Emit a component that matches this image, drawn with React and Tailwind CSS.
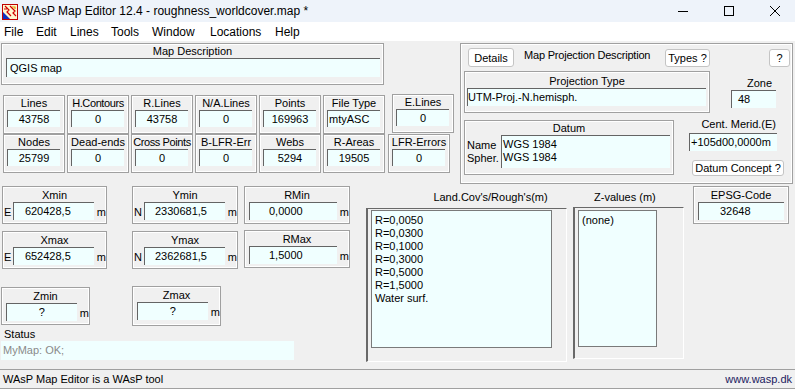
import clsx from 'clsx';

const frame = 'border border-[#a0a0a0] shadow-[inset_1px_1px_0_#fff,inset_-1px_-1px_0_#fff]';

function Edit({ className, children }) {
    return (
        <div className={clsx('bg-[#f0ffff] border-t border-l border-[#646464] whitespace-nowrap overflow-hidden', className)}>
            {children}
        </div>
    );
}

function Btn({ className, children }) {
    return (
        <div className={clsx('bg-white border border-[#c4c4c4] rounded-[3px] flex items-center justify-center leading-[14px]', className)}>
            {children}
        </div>
    );
}

function Stat({ label, value, className, left, tight }) {
    return (
        <div className={clsx(frame, 'w-[62px] h-[39px] shrink-0', className)}>
            <div className={clsx('text-center leading-[14px] whitespace-nowrap', tight && 'tracking-[-0.4px] -mx-[2px]')}>{label}</div>
            <Edit className={clsx('ml-[3px] w-[53px] h-[17px] leading-[16px]', left ? 'pl-[1px]' : 'text-center')}>{value}</Edit>
        </div>
    );
}

function Coord({ label, letter, value, pad, w, editW, editMl, className }) {
    return (
        <div className={clsx(frame, 'h-[38px] shrink-0', w, className)}>
            <div className="text-center leading-[14px] mt-[1px]">{label}</div>
            <div className="flex items-center h-[18px]">
                {letter ? <span className="w-[9px] pl-[1px] pt-[2px]">{letter}</span> : null}
                <Edit className={clsx('h-[18px] leading-[17px]', editW, editMl, pad)}>{value}</Edit>
                <span className="ml-[3px] pt-[2px]">m</span>
            </div>
        </div>
    );
}

function WaspIcon() {
    return (
        <svg width="16" height="16" viewBox="0 0 16 16">
            <rect x="0.5" y="0.5" width="15" height="15" fill="#fff8d0" stroke="#c00000" />
            <path d="M1 15 L1 8 L8 15 Z" fill="#1030c0" />
            <path d="M3 2 L7 6 L5 8 L9 12 M8 2 L13 7 L11 9 L14 12 M2 5 L5 5" stroke="#d00000" strokeWidth="1.2" fill="none" />
            <path d="M10 3 L13 3 L13 5" stroke="#e0a000" strokeWidth="1.2" fill="none" />
        </svg>
    );
}

export default function App() {
    const menu = [
        ['File', 'w-[32px]'],
        ['Edit', 'w-[34px]'],
        ['Lines', 'w-[41px]'],
        ['Tools', 'w-[41px]'],
        ['Window', 'w-[58px]'],
        ['Locations', 'w-[65px]'],
        ['Help', 'w-[40px]'],
    ];
    const roughs = ['R=0,0050', 'R=0,0300', 'R=0,1000', 'R=0,3000', 'R=0,5000', 'R=1,5000', 'Water surf.'];

    return (
        <div className="w-[795px] h-[389px] overflow-hidden bg-[#f0f0f0] text-[11px] text-black font-['Liberation_Sans',Arial,sans-serif]">
            {/* title bar */}
            <div className="h-[22px] bg-[#eef3fa] flex items-center text-[12px]">
                <div className="ml-[2px] mt-[2px]"><WaspIcon /></div>
                <span className="ml-[4px]">WAsP Map Editor 12.4 - roughness_worldcover.map *</span>
                <div className="ml-auto flex mr-[-3px] h-full">
                    <div className="w-[46px] flex items-center justify-center">
                        <svg width="10" height="10" viewBox="0 0 10 10"><path d="M0 5.5 H10" stroke="#000" strokeWidth="1" /></svg>
                    </div>
                    <div className="w-[46px] flex items-center justify-center">
                        <svg width="10" height="10" viewBox="0 0 10 10"><rect x="0.5" y="0.5" width="9" height="9" fill="none" stroke="#000" strokeWidth="1" /></svg>
                    </div>
                    <div className="w-[46px] flex items-center justify-center">
                        <svg width="10" height="10" viewBox="0 0 10 10"><path d="M0 0 L10 10 M10 0 L0 10" stroke="#000" strokeWidth="1" /></svg>
                    </div>
                </div>
            </div>

            {/* menu bar */}
            <div className="h-[19px] bg-white flex items-center pl-[4px] text-[12px]">
                {menu.map(([m, w]) => <span key={m} className={w}>{m}</span>)}
            </div>

            {/* upper part */}
            <div className="h-[142px] flex">
                <div className="w-[457px] shrink-0 pt-[2px]">
                    <div className={clsx(frame, 'ml-[1px] w-[383px] h-[42px]')}>
                        <div className="text-center leading-[13px] mt-[1px]">Map Description</div>
                        <Edit className="ml-[4px] w-[374px] h-[19px] leading-[18px] pl-[3px]">QGIS map</Edit>
                    </div>

                    <div className="mt-[9px] ml-[3px] flex items-start gap-[2px]">
                        <Stat className="mt-[1px]" label="Lines" value="43758" />
                        <Stat className="mt-[1px]" label="H.Contours" value="0" tight />
                        <Stat className="mt-[1px]" label="R.Lines" value="43758" />
                        <Stat className="mt-[1px]" label="N/A.Lines" value="0" />
                        <Stat className="mt-[1px]" label="Points" value="169963" />
                        <Stat className="mt-[1px]" label="File Type" value="mtyASC" left />
                        <Stat className="ml-[5px]" label="E.Lines" value="0" />
                    </div>
                    <div className="mt-[0px] ml-[3px] flex items-start gap-[2px]">
                        <Stat label="Nodes" value="25799" />
                        <Stat label="Dead-ends" value="0" />
                        <Stat label="Cross Points" value="0" tight />
                        <Stat label="B-LFR-Err" value="0" />
                        <Stat label="Webs" value="5294" />
                        <Stat label="R-Areas" value="19505" />
                        <Stat className="ml-[1px]" label="LFR-Errors" value="0" />
                    </div>
                </div>

                {/* projection panel */}
                <div className={clsx(frame, 'ml-[3px] mt-[2px] w-[333px] h-[141px]')}>
                    <div className="flex items-start h-[27px]">
                        <Btn className="ml-[7px] mt-[4px] w-[46px] h-[19px]">Details</Btn>
                        <div className="ml-[10px] mt-[3px] w-[141px] whitespace-nowrap tracking-[-0.2px]">Map Projection Description</div>
                        <Btn className="mt-[5px] w-[45px] h-[18px]">Types ?</Btn>
                        <Btn className="ml-[59px] mt-[5px] w-[21px] h-[18px]">?</Btn>
                    </div>
                    <div className="flex items-start">
                        <div className={clsx(frame, 'ml-[3px] w-[246px] h-[42px]')}>
                            <div className="text-center leading-[14px] mt-[2px]">Projection Type</div>
                            <Edit className="ml-[2px] w-[239px] h-[18px] leading-[17px] bg-[#f0f0f0]">UTM-Proj.-N.hemisph.</Edit>
                        </div>
                        <div className="ml-[21px] w-[45px]">
                            <div className="leading-[14px] mt-[5px] pl-[16px]">Zone</div>
                            <Edit className="h-[18px] leading-[17px] bg-[#f0f0f0] pl-[6px]">48</Edit>
                        </div>
                    </div>
                    <div className="flex items-start mt-[7px]">
                        <div className={clsx(frame, 'ml-[3px] w-[210px] h-[55px]')}>
                            <div className="text-center leading-[14px]">Datum</div>
                            <div className="flex">
                                <div className="ml-[2px] w-[34px] leading-[13px] pt-[4px]">
                                    <div>Name</div>
                                    <div>Spher.</div>
                                </div>
                                <Edit className="w-[169px] h-[33px] bg-[#f0f0f0] leading-[13px] pt-[2px] pl-[1px]">
                                    <div>WGS 1984</div>
                                    <div>WGS 1984</div>
                                </Edit>
                            </div>
                        </div>
                        <div className="ml-[15px] w-[88px]">
                            <div className="leading-[14px] mt-[-3px] text-right pr-[1px]">Cent. Merid.(E)</div>
                            <Edit className="mt-[2px] h-[18px] leading-[17px] pl-[1px]">+105d00,0000m</Edit>
                            <Btn className="ml-[3px] mt-[9px] w-[92px] h-[16px]">Datum Concept ?</Btn>
                        </div>
                    </div>
                </div>
            </div>

            {/* lower part */}
            <div className="h-[186px] flex">
                <div className="w-[360px] shrink-0 pt-[3px]">
                    <div className="flex items-start">
                        <Coord className="ml-[2px]" w="w-[105px]" label="Xmin" letter="E" value="620428,5" editW="w-[82px]" editMl="ml-[1px]" pad="pl-[11px]" />
                        <Coord className="ml-[25px]" w="w-[106px]" label="Ymin" letter="N" value="2330681,5" editW="w-[81px]" editMl="ml-[2px]" pad="pl-[10px]" />
                        <Coord className="ml-[6px]" w="w-[106px]" label="RMin" value="0,0000" editW="w-[88px]" editMl="ml-[4px]" pad="pl-[19px]" />
                    </div>
                    <div className="flex items-start mt-[7px]">
                        <Coord className="ml-[2px]" w="w-[105px]" label="Xmax" letter="E" value="652428,5" editW="w-[82px]" editMl="ml-[1px]" pad="pl-[11px]" />
                        <Coord className="ml-[25px]" w="w-[106px]" label="Ymax" letter="N" value="2362681,5" editW="w-[81px]" editMl="ml-[2px]" pad="pl-[10px]" />
                        <Coord className="ml-[6px] -mt-[1px]" w="w-[106px]" label="RMax" value="1,5000" editW="w-[88px]" editMl="ml-[4px]" pad="pl-[19px]" />
                    </div>
                    <div className="flex items-start mt-[17px]">
                        <Coord className="ml-[1px] mt-[1px]" w="w-[89px]" label="Zmin" value="?" editW="w-[72px]" editMl="ml-[4px]" pad="text-center" />
                        <Coord className="ml-[42px] h-[40px]" w="w-[89px]" label="Zmax" value="?" editW="w-[72px]" editMl="ml-[4px]" pad="text-center" />
                    </div>
                    <div className="ml-[4px] leading-[14px] mt-[1px]">Status</div>
                    <div className="ml-[1px] w-[293px] h-[19px] bg-[#f0ffff] text-[#8a8a8a] leading-[18px] pl-[2px]">MyMap: OK;</div>
                </div>

                <div className="ml-[6px] w-[201px] shrink-0">
                    <div className="text-center leading-[14px] mt-[7px] pl-[48px]">Land.Cov's/Rough's(m)</div>
                    <div className="mt-[4px] h-[154px] border-l-2 border-t border-[#696969] border-r border-b border-r-white border-b-white">
                        <div className="ml-[3px] mt-[1px] w-[181px] h-[138px] bg-[#f0ffff] border border-[#7a7a7a] leading-[13px] pl-[3px] pt-[3px]">
                            {roughs.map(r => <div key={r}>{r}</div>)}
                        </div>
                    </div>
                </div>

                <div className="ml-[6px] w-[111px] shrink-0">
                    <div className="leading-[14px] mt-[7px] pl-[21px]">Z-values (m)</div>
                    <div className="mt-[3px] h-[152px] border-l-2 border-t border-[#696969] border-r border-b border-r-white border-b-white">
                        <div className="ml-[3px] mt-[2px] w-[79px] h-[137px] bg-[#f0ffff] border border-[#7a7a7a] leading-[13px] pl-[3px] pt-[3px]">(none)</div>
                    </div>
                </div>

                <div className={clsx(frame, 'ml-[9px] mt-[3px] w-[96px] h-[38px]')}>
                    <div className="text-center leading-[14px] mt-[1px]">EPSG-Code</div>
                    <Edit className="ml-[4px] w-[86px] h-[18px] leading-[17px] pl-[21px]">32648</Edit>
                </div>
            </div>

            {/* status bar */}
            <div className="h-[20px] border-t border-b border-[#a0a0a0] flex items-center justify-between px-[3px]">
                <span>WAsP Map Editor is a WAsP tool</span>
                <span className="text-[#202060]">www.wasp.dk</span>
            </div>
        </div>
    );
}
